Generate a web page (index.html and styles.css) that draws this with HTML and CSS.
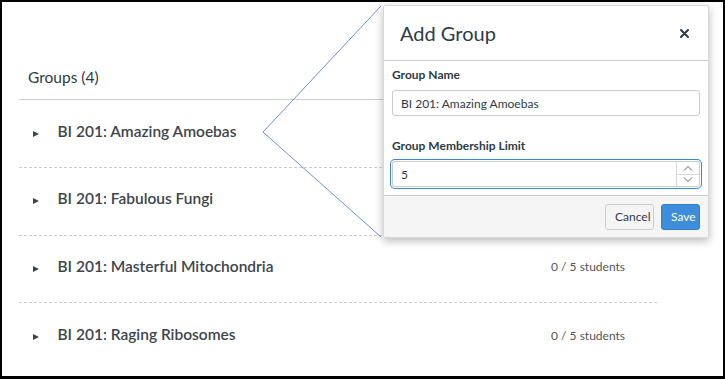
FILE: index.html
```html
<!DOCTYPE html>
<html>
<head>
<meta charset="utf-8">
<link rel="stylesheet" href="styles.css">
</head>
<body>
<div class="frame">
  <div class="page">
    <div class="heading">Groups (4)</div>
    <ul class="groups">
      <li class="group"><span class="caret"></span><span class="name">BI 201: Amazing Amoebas</span></li>
      <li class="group"><span class="caret"></span><span class="name">BI 201: Fabulous Fungi</span></li>
      <li class="group"><span class="caret"></span><span class="name">BI 201: Masterful Mitochondria</span><span class="count">0 / 5 students</span></li>
      <li class="group"><span class="caret"></span><span class="name">BI 201: Raging Ribosomes</span><span class="count">0 / 5 students</span></li>
    </ul>
  </div>

  <svg class="callout" width="721" height="374" viewBox="0 0 721 374">
    <polyline points="379,4 261,130 379,235" fill="none" stroke="#6f8fd8" stroke-width="1"/>
  </svg>

  <div class="modal">
    <div class="modal-header">
      <h2 class="modal-title">Add Group</h2>
      <svg class="close" width="9" height="9" viewBox="0 0 9 9"><path d="M1 1L8 8M8 1L1 8" stroke="#2d3b45" stroke-width="2" stroke-linecap="round"/></svg>
    </div>
    <div class="modal-body">
      <label class="label">Group Name</label>
      <div class="input">BI 201: Amazing Amoebas</div>
      <label class="label label-second">Group Membership Limit</label>
      <div class="input input-focus">
        <span class="value">5</span>
        <span class="spinner">
          <span class="spin"><svg width="10" height="6" viewBox="0 0 10 6"><path d="M1 5.5L5 1.5L9 5.5" fill="none" stroke="#666" stroke-width="1"/></svg></span>
          <span class="spin spin-down"><svg width="10" height="6" viewBox="0 0 10 6"><path d="M1 0.5L5 4.5L9 0.5" fill="none" stroke="#666" stroke-width="1"/></svg></span>
        </span>
      </div>
    </div>
    <div class="modal-footer">
      <button class="btn btn-cancel">Cancel</button>
      <button class="btn btn-save">Save</button>
    </div>
  </div>
</div>
</body>
</html>
```

FILE: styles.css
```css
* { box-sizing: border-box; }
html, body { margin: 0; padding: 0; background: #fff; }
body { font-family: Lato, "Open Sans", sans-serif; color: #2d3b45; }

.frame {
  position: relative;
  width: 725px;
  height: 379px;
  border: 2px solid #000;
  border-bottom-width: 3px;
  overflow: hidden;
  background: #fff;
}

.page {
  padding: 0 64px 0 17px;
}

.heading {
  height: 98px;
  padding: 64px 0 0 9px;
  font-size: 15.5px;
  line-height: 22px;
  color: #2d3b45;
  border-bottom: 1px solid #c7cdd1;
  width: 638px;
}

.groups {
  list-style: none;
  margin: 0;
  padding: 0;
  width: 638px;
}

.group {
  display: flex;
  align-items: center;
  height: 68px;
  padding: 0 32px 6px 14px;
  border-bottom: 1px dashed #c7cdd1;
}
.group:nth-child(2), .group:nth-child(3) { height: 67.5px; }
.group:last-child { border-bottom: none; }

.caret {
  width: 0;
  height: 0;
  margin-top: 6px;
  border-left: 6.5px solid #3d454c;
  border-top: 3.5px solid transparent;
  border-bottom: 3.5px solid transparent;
  margin-right: 18.5px;
}

.name {
  font-size: 15.5px;
  font-weight: 600;
  color: #3d454c;
  flex: 1;
}

.count {
  font-size: 12px;
  color: #555;
  padding-top: 2px;
}

.callout {
  position: absolute;
  left: 0;
  top: 0;
  pointer-events: none;
}

.modal {
  position: absolute;
  left: 381px;
  top: 3px;
  width: 326px;
  height: 233px;
  background: #fff;
  border: 1px solid #d5d9dc;
  border-radius: 2px;
  box-shadow: 0 3px 8px rgba(0,0,0,0.28);
  display: flex;
  flex-direction: column;
}

.modal-header {
  height: 55px;
  display: flex;
  align-items: center;
  justify-content: space-between;
  padding: 0 19px 0 16px;
  border-bottom: 1px solid #c7cdd1;
}
.modal-title {
  margin: 0;
  font-size: 20px;
  font-weight: 400;
  color: #2d3b45;
}

.modal-body {
  padding: 6px 8px 0 8px;
  flex: 1;
  display: flex;
  flex-direction: column;
}

.label {
  font-size: 12px;
  font-weight: 700;
  line-height: 16px;
  color: #2d3b45;
  margin-top: 0;
  margin-bottom: 7px;
}
.label-second { margin-top: 22px; }

.input {
  height: 26px;
  border: 1px solid #c7cdd1;
  border-radius: 3px;
  display: flex;
  align-items: center;
  padding-left: 8px;
  font-size: 12px;
  color: #2d3b45;
}

.input-focus {
  position: relative;
  padding-right: 0;
  border-color: #c7cdd1;
  box-shadow: 0 0 0 1px #fff, 0 0 0 2px #3a87d8;
}
.input-focus .value { flex: 1; }

.spinner {
  display: flex;
  flex-direction: column;
  width: 23px;
  height: 100%;
  border-left: 1px solid #d5d9dc;
}
.spin {
  flex: 1;
  display: flex;
  align-items: center;
  justify-content: center;
}
.spin-down { border-top: 1px solid #d5d9dc; }

.modal-footer {
  height: 42px;
  background: #f5f5f5;
  border-top: 1px solid #c7cdd1;
  display: flex;
  align-items: center;
  justify-content: flex-end;
  gap: 7px;
  padding: 0 8px 0 0;
}

.btn {
  height: 26px;
  border-radius: 3px;
  font-family: Lato, "Open Sans", sans-serif;
  font-size: 12px;
  padding: 0 9px;
  cursor: pointer;
}
.btn-cancel {
  background: #f5f5f5;
  border: 1px solid #c7cdd1;
  color: #2d3b45;
  width: 49px;
}
.btn-save {
  background: #3d8ddb;
  border: 1px solid #3580cc;
  color: #fff;
  width: 39px;
}
```
